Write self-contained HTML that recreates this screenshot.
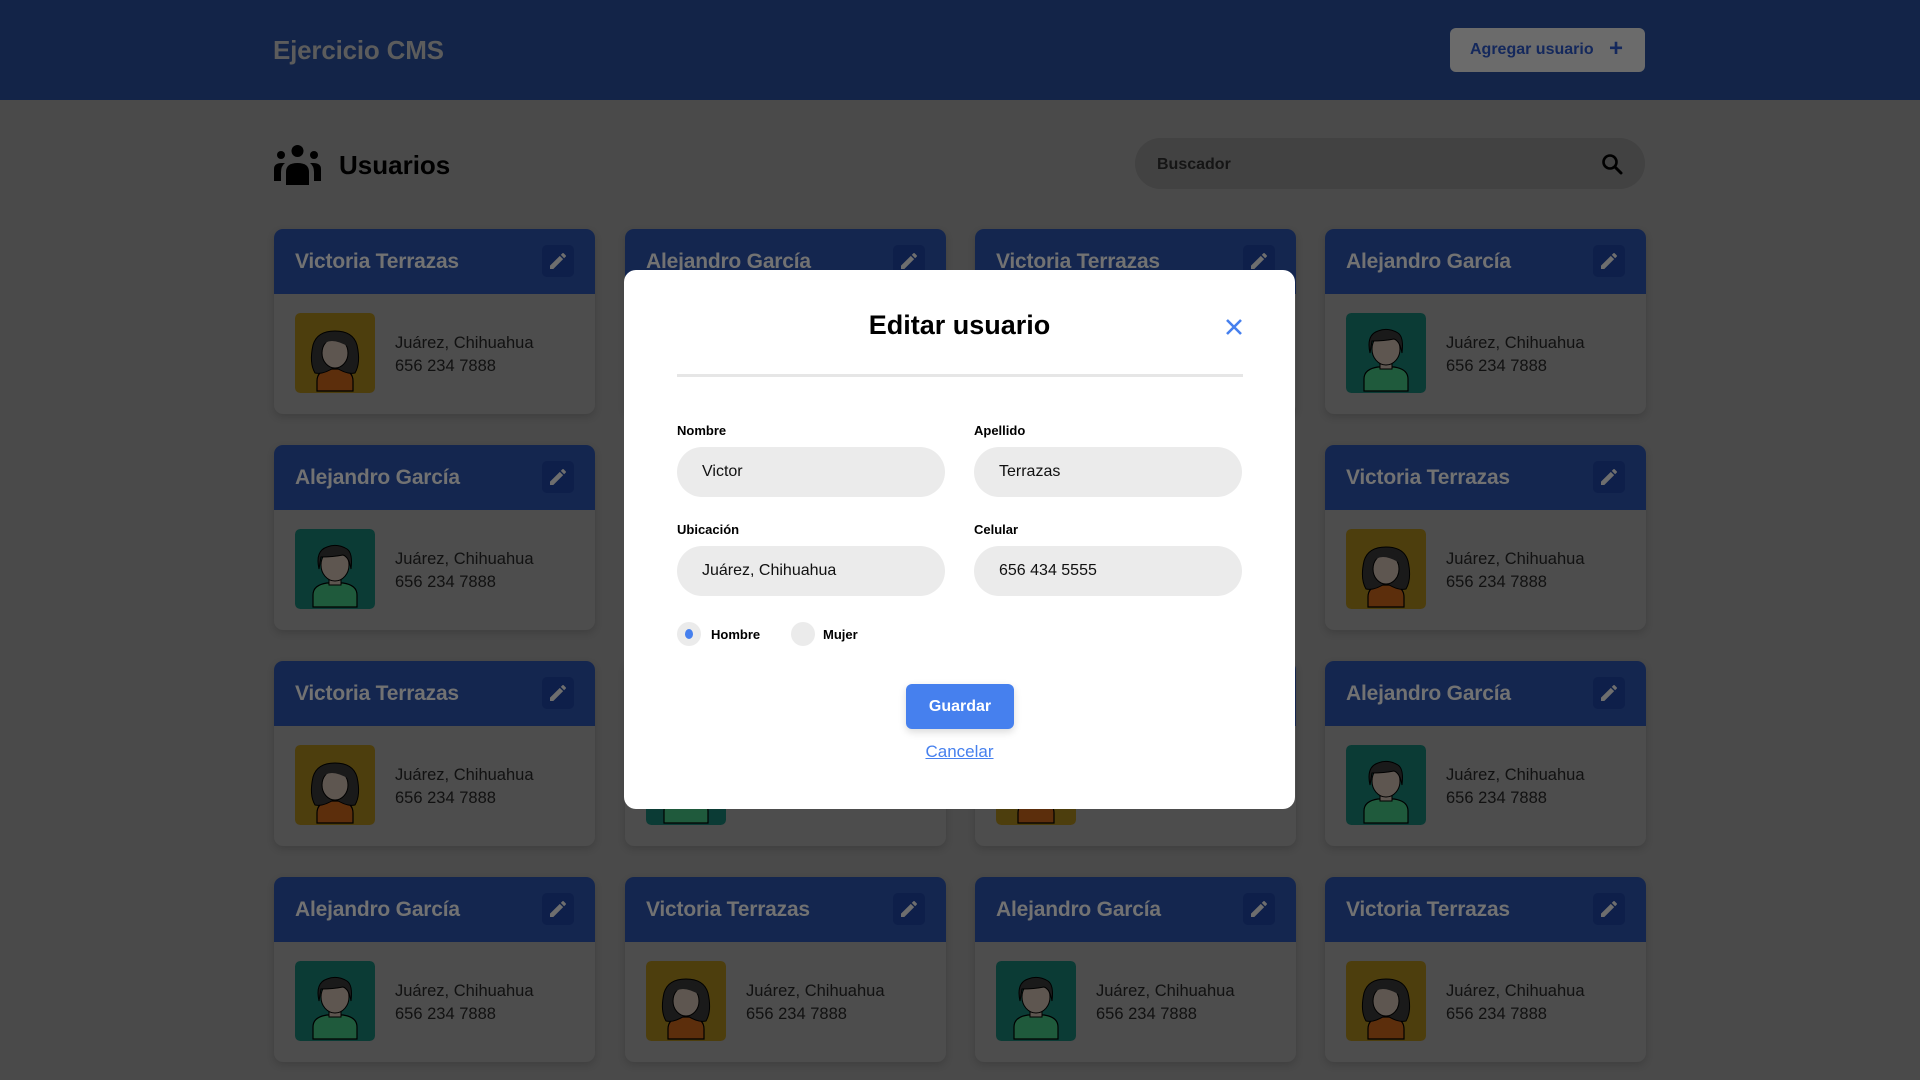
<!DOCTYPE html>
<html><head><meta charset="utf-8"><style>
*{box-sizing:border-box;margin:0;padding:0}
body{width:1920px;height:1080px;overflow:hidden;background:#4a4a4a;font-family:"Liberation Sans",sans-serif;position:relative}
.hdr{position:absolute;left:0;top:0;width:1920px;height:100px;background:#132448}
.logo{position:absolute;left:273px;top:35px;font-size:26px;font-weight:bold;color:#5c5c5c;letter-spacing:-0.2px}
.add{position:absolute;left:1450px;top:28px;width:195px;height:44px;background:#6b6b6b;border-radius:6px;color:#14285c;font-weight:bold;font-size:16px;line-height:44px;padding-left:20px}
.add span{font-size:24px;position:absolute;right:22px;top:-1px}
.ttl{position:absolute;left:339px;top:150px;font-size:26px;font-weight:bold;color:#000}
.search{position:absolute;left:1135px;top:138px;width:510px;height:51px;background:#424242;border-radius:26px}
.search b{position:absolute;left:22px;top:18px;font-size:16px;color:#151515}
.card{position:absolute;width:321px;height:185px;background:#4d4d4d;border-radius:9px;overflow:hidden;box-shadow:0 3px 8px rgba(0,0,0,.15)}
.ch{height:65px;background:#14264f;position:relative}
.ch b{position:absolute;left:21px;top:21px;font-size:21px;color:#727272;letter-spacing:-0.2px}
.ed{position:absolute;left:268px;top:16px;width:32px;height:32px;background:#0e1f4a;border-radius:5px}
.av{position:absolute;left:21px;top:84px;width:80px;height:80px;border-radius:5px}
.tx{position:absolute;left:121px;top:103px;font-size:16.5px;line-height:23px;color:#111}
.ov{position:absolute;left:624px;top:270px;width:671px;height:539px;background:#fff;border-radius:12px}
.ov h1{position:absolute;left:0;width:100%;text-align:center;top:40px;font-size:27px;color:#000}
.div{position:absolute;left:53px;top:104px;width:566px;height:3px;background:#e6e6e6}
.lb{position:absolute;font-size:13px;font-weight:bold;color:#000}
.in{position:absolute;width:268px;height:50px;background:#ebebeb;border-radius:25px;font-size:16px;color:#111;line-height:50px;padding-left:25px}
.rd{position:absolute;top:352px;width:24px;height:24px;border-radius:50%;background:#ebebeb}
.btn{position:absolute;left:282px;top:414px;width:108px;height:45px;background:#4680ee;border-radius:6px;color:#fff;font-weight:bold;font-size:16px;line-height:45px;text-align:center;box-shadow:0 3px 8px rgba(0,0,0,.15)}
.cn{position:absolute;left:0;width:100%;text-align:center;top:472px;font-size:17px;color:#4680ee;text-decoration:underline}
</style></head><body>
<div class="hdr"><div class="logo">Ejercicio CMS</div><div class="add">Agregar usuario<span>+</span></div></div>
<svg style="position:absolute;left:274px;top:145px" width="47" height="40" viewBox="0 0 47 40"><circle cx="23.5" cy="6" r="6"/><circle cx="7" cy="10" r="4"/><circle cx="40" cy="10" r="4"/><path d="M12 40V27q0-9 11.5-9T35 27v13z"/><path d="M0 36V24q0-6 8-6h3q-4 3-4 9v9z"/><path d="M47 36V24q0-6-8-6h-3q4 3 4 9v9z"/></svg>
<div class="ttl">Usuarios</div>
<div class="search"><b>Buscador</b><svg style="position:absolute;left:466px;top:15px" width="22" height="22" viewBox="0 0 22 22"><circle cx="9" cy="9" r="6.5" fill="none" stroke="#000" stroke-width="2.6"/><path d="M14 14l6 6" stroke="#000" stroke-width="3" stroke-linecap="round"/></svg></div>

<svg width="0" height="0" style="position:absolute"><defs>
<symbol id="w" viewBox="0 0 80 80"><rect width="80" height="80" rx="5" fill="#4d3e0d"/><path d="M22 78v-10q0-10 12-12h12q12 2 12 12v10z" fill="#5c2e0c" stroke="#000" stroke-width="1.2"/><path d="M20 60q-6-10-2-28q4-14 22-14t22 14q4 18-2 28q-8 2-20-6q-12 8-20 6z" fill="#1a1a1a" stroke="#000"/><ellipse cx="40" cy="40" rx="13" ry="15" fill="#5e5650" stroke="#000"/><path d="M26 34q8-12 28 0q-4-14-14-14t-14 14z" fill="#1a1a1a"/></symbol>
<symbol id="m" viewBox="0 0 80 80"><rect width="80" height="80" rx="5" fill="#0b3b35"/><path d="M18 78v-12q0-10 14-12h16q14 2 14 12v12z" fill="#1f5a3c" stroke="#000" stroke-width="1.2"/><rect x="34" y="48" width="12" height="8" fill="#5e5650" stroke="#000"/><ellipse cx="40" cy="36" rx="14" ry="16" fill="#5e5650" stroke="#000"/><path d="M24 40q-4-18 8-22q10-4 20 2q6 4 4 20q-2-12-8-14q-10 2-22 2z" fill="#1a1a1a" stroke="#000"/></symbol>
<symbol id="p" viewBox="0 0 24 24"><path d="M3 17.25V21h3.75L17.8 9.94l-3.75-3.75zM20.7 7.04a1 1 0 000-1.41l-2.34-2.34a1 1 0 00-1.41 0l-1.83 1.83 3.75 3.75z" fill="#6e6e6e"/></symbol>
</defs></svg>

<div class="card" style="left:274px;top:229px"><div class="ch"><b>Victoria Terrazas</b><div class="ed"><svg width="32" height="32" viewBox="-6 -6 36 36"><use href="#p" width="24" height="24"/></svg></div></div><svg class="av" viewBox="0 0 80 80"><use href="#w"/></svg><div class="tx">Juárez, Chihuahua<br>656 234 7888</div></div>
<div class="card" style="left:625px;top:229px"><div class="ch"><b>Alejandro García</b><div class="ed"><svg width="32" height="32" viewBox="-6 -6 36 36"><use href="#p" width="24" height="24"/></svg></div></div><svg class="av" viewBox="0 0 80 80"><use href="#m"/></svg><div class="tx">Juárez, Chihuahua<br>656 234 7888</div></div>
<div class="card" style="left:975px;top:229px"><div class="ch"><b>Victoria Terrazas</b><div class="ed"><svg width="32" height="32" viewBox="-6 -6 36 36"><use href="#p" width="24" height="24"/></svg></div></div><svg class="av" viewBox="0 0 80 80"><use href="#w"/></svg><div class="tx">Juárez, Chihuahua<br>656 234 7888</div></div>
<div class="card" style="left:1325px;top:229px"><div class="ch"><b>Alejandro García</b><div class="ed"><svg width="32" height="32" viewBox="-6 -6 36 36"><use href="#p" width="24" height="24"/></svg></div></div><svg class="av" viewBox="0 0 80 80"><use href="#m"/></svg><div class="tx">Juárez, Chihuahua<br>656 234 7888</div></div>

<div class="card" style="left:274px;top:445px"><div class="ch"><b>Alejandro García</b><div class="ed"><svg width="32" height="32" viewBox="-6 -6 36 36"><use href="#p" width="24" height="24"/></svg></div></div><svg class="av" viewBox="0 0 80 80"><use href="#m"/></svg><div class="tx">Juárez, Chihuahua<br>656 234 7888</div></div>
<div class="card" style="left:1325px;top:445px"><div class="ch"><b>Victoria Terrazas</b><div class="ed"><svg width="32" height="32" viewBox="-6 -6 36 36"><use href="#p" width="24" height="24"/></svg></div></div><svg class="av" viewBox="0 0 80 80"><use href="#w"/></svg><div class="tx">Juárez, Chihuahua<br>656 234 7888</div></div>

<div class="card" style="left:274px;top:661px"><div class="ch"><b>Victoria Terrazas</b><div class="ed"><svg width="32" height="32" viewBox="-6 -6 36 36"><use href="#p" width="24" height="24"/></svg></div></div><svg class="av" viewBox="0 0 80 80"><use href="#w"/></svg><div class="tx">Juárez, Chihuahua<br>656 234 7888</div></div>
<div class="card" style="left:625px;top:661px"><div class="ch"></div><svg class="av" viewBox="0 0 80 80"><use href="#m"/></svg></div>
<div class="card" style="left:975px;top:661px"><div class="ch"></div><svg class="av" viewBox="0 0 80 80"><use href="#w"/></svg></div>
<div class="card" style="left:1325px;top:661px"><div class="ch"><b>Alejandro García</b><div class="ed"><svg width="32" height="32" viewBox="-6 -6 36 36"><use href="#p" width="24" height="24"/></svg></div></div><svg class="av" viewBox="0 0 80 80"><use href="#m"/></svg><div class="tx">Juárez, Chihuahua<br>656 234 7888</div></div>

<div class="card" style="left:274px;top:877px"><div class="ch"><b>Alejandro García</b><div class="ed"><svg width="32" height="32" viewBox="-6 -6 36 36"><use href="#p" width="24" height="24"/></svg></div></div><svg class="av" viewBox="0 0 80 80"><use href="#m"/></svg><div class="tx">Juárez, Chihuahua<br>656 234 7888</div></div>
<div class="card" style="left:625px;top:877px"><div class="ch"><b>Victoria Terrazas</b><div class="ed"><svg width="32" height="32" viewBox="-6 -6 36 36"><use href="#p" width="24" height="24"/></svg></div></div><svg class="av" viewBox="0 0 80 80"><use href="#w"/></svg><div class="tx">Juárez, Chihuahua<br>656 234 7888</div></div>
<div class="card" style="left:975px;top:877px"><div class="ch"><b>Alejandro García</b><div class="ed"><svg width="32" height="32" viewBox="-6 -6 36 36"><use href="#p" width="24" height="24"/></svg></div></div><svg class="av" viewBox="0 0 80 80"><use href="#m"/></svg><div class="tx">Juárez, Chihuahua<br>656 234 7888</div></div>
<div class="card" style="left:1325px;top:877px"><div class="ch"><b>Victoria Terrazas</b><div class="ed"><svg width="32" height="32" viewBox="-6 -6 36 36"><use href="#p" width="24" height="24"/></svg></div></div><svg class="av" viewBox="0 0 80 80"><use href="#w"/></svg><div class="tx">Juárez, Chihuahua<br>656 234 7888</div></div>

<div class="ov">
<h1>Editar usuario</h1>
<svg style="position:absolute;left:601px;top:48px" width="18" height="18" viewBox="0 0 18 18"><path d="M2 2l14 14M16 2L2 16" stroke="#4680ee" stroke-width="2.6"/></svg>
<div class="div"></div>
<div class="lb" style="left:53px;top:153px">Nombre</div>
<div class="lb" style="left:350px;top:153px">Apellido</div>
<div class="in" style="left:53px;top:177px">Victor</div>
<div class="in" style="left:350px;top:177px">Terrazas</div>
<div class="lb" style="left:53px;top:252px">Ubicación</div>
<div class="lb" style="left:350px;top:252px">Celular</div>
<div class="in" style="left:53px;top:276px">Juárez, Chihuahua</div>
<div class="in" style="left:350px;top:276px">656 434 5555</div>
<div class="rd" style="left:53px"><div style="position:absolute;left:8px;top:7px;width:8px;height:10px;border-radius:50%;background:#4680ee"></div></div>
<div class="lb" style="left:87px;top:357px">Hombre</div>
<div class="rd" style="left:167px"></div>
<div class="lb" style="left:199px;top:357px">Mujer</div>
<div class="btn">Guardar</div>
<div class="cn">Cancelar</div>
</div>
</body></html>
